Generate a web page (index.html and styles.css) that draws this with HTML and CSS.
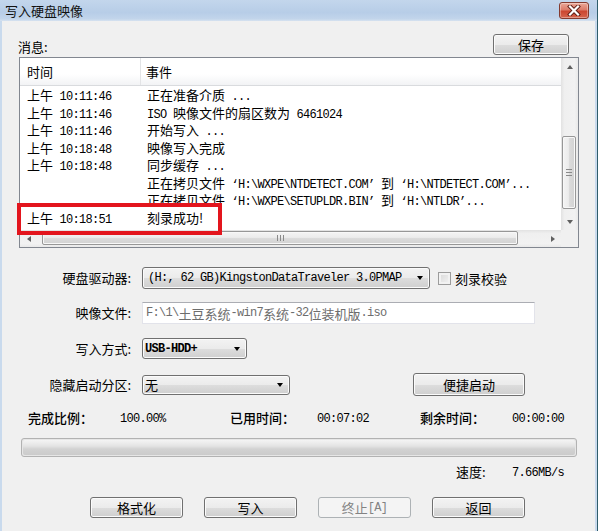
FILE: index.html
```html
<!DOCTYPE html>
<html lang="zh-CN">
<head>
<meta charset="utf-8">
<title>写入硬盘映像</title>
<link rel="stylesheet" href="styles.css">
</head>
<body>
<div class="window">
  <div class="titlebar">
    <span class="title">写入硬盘映像</span>
    <div class="close">
      <svg width="14" height="11" viewBox="0 0 14 11">
        <path d="M3 1.5 L11 9.5 M11 1.5 L3 9.5" stroke="#5a1a12" stroke-width="4" stroke-linecap="square" fill="none"/>
        <path d="M3 1.5 L11 9.5 M11 1.5 L3 9.5" stroke="#ffffff" stroke-width="2.2" stroke-linecap="square" fill="none"/>
      </svg>
    </div>
  </div>
  <div class="client">
    <div class="msg-head">
      <span class="msg-label">消息:</span>
      <div class="btn btn-save">保存</div>
    </div>

    <div class="listview">
      <div class="lv-body">
        <div class="lv-content">
          <div class="lv-header">
            <div class="h1">时间</div>
            <div class="h2">事件</div>
          </div>
          <div class="lv-row"><div class="c1">上午<span class="m"> 10:11:46</span></div><div class="c2">正在准备介质<span class="m"> ...</span></div></div>
          <div class="lv-row"><div class="c1">上午<span class="m"> 10:11:46</span></div><div class="c2"><span class="m">ISO </span>映像文件的扇区数为<span class="m"> 6461024</span></div></div>
          <div class="lv-row"><div class="c1">上午<span class="m"> 10:11:46</span></div><div class="c2">开始写入<span class="m"> ...</span></div></div>
          <div class="lv-row"><div class="c1">上午<span class="m"> 10:18:48</span></div><div class="c2">映像写入完成</div></div>
          <div class="lv-row"><div class="c1">上午<span class="m"> 10:18:48</span></div><div class="c2">同步缓存<span class="m"> ...</span></div></div>
          <div class="lv-row"><div class="c1"></div><div class="c2">正在拷贝文件<span class="m"> ‘H:\WXPE\NTDETECT.COM’ </span>到<span class="m"> ‘H:\NTDETECT.COM’...</span></div></div>
          <div class="lv-row"><div class="c1"></div><div class="c2">正在拷贝文件<span class="m"> ‘H:\WXPE\SETUPLDR.BIN’ </span>到<span class="m"> ‘H:\NTLDR’...</span></div></div>
          <div class="lv-row"><div class="c1">上午<span class="m"> 10:18:51</span></div><div class="c2">刻录成功!</div></div>
        </div>
        <div class="vscroll">
          <div class="sarrow"><span class="tri-up"></span></div>
          <div class="vtrack">
            <div class="vthumb"><span class="vgrip"></span></div>
          </div>
          <div class="sarrow"><span class="tri-down"></span></div>
        </div>
      </div>
      <div class="lv-foot">
        <div class="hscroll">
          <div class="sarrow-h"><span class="tri-left"></span></div>
          <div class="htrack">
            <div class="hthumb"><span class="hgrip"></span></div>
          </div>
          <div class="sarrow-h"><span class="tri-right"></span></div>
        </div>
        <div class="corner"></div>
      </div>
      <div class="mark"></div>
    </div>

    <div class="frow row-drive">
      <div class="flabel">硬盘驱动器:</div>
      <div class="select sel-drive"><span class="m">(H:, 62 GB)KingstonDataTraveler 3.0PMAP</span><span class="caret"></span></div>
      <div class="check"></div>
      <span class="check-label">刻录校验</span>
    </div>

    <div class="frow row-image">
      <div class="flabel">映像文件:</div>
      <div class="input"><span class="m">F:\1\</span>土豆系统<span class="m">-win7</span>系统<span class="m">-32</span>位装机版<span class="m">.iso</span></div>
    </div>

    <div class="frow row-mode">
      <div class="flabel">写入方式:</div>
      <div class="select sel-mode"><span class="m b">USB-HDD+</span><span class="caret"></span></div>
    </div>

    <div class="frow row-hide">
      <div class="flabel">隐藏启动分区:</div>
      <div class="select sel-hide"><span>无</span><span class="caret"></span></div>
      <div class="btn btn-quick">便捷启动</div>
    </div>

    <div class="stats">
      <div class="st st-l1">完成比例：</div>
      <div class="st st-v1"><span class="m">100.00%</span></div>
      <div class="st st-l2">已用时间：</div>
      <div class="st st-v2"><span class="m">00:07:02</span></div>
      <div class="st st-l3">剩余时间：</div>
      <div class="st"><span class="m">00:00:00</span></div>
    </div>

    <div class="progress"><div class="fill" style="width:100%"></div></div>

    <div class="speed">
      <div class="sp-label">速度:</div>
      <div><span class="m">7.66MB/s</span></div>
    </div>

    <div class="actions">
      <div class="btn">格式化</div>
      <div class="btn">写入</div>
      <div class="btn disabled">终止<span class="m">[A]</span></div>
      <div class="btn">返回</div>
    </div>
  </div>
</div>
</body>
</html>
```

FILE: styles.css
```css
* { box-sizing: border-box; margin: 0; padding: 0; }
html, body { width: 598px; height: 531px; overflow: hidden; }
body {
  background: #f0f0f0;
  font-family: "Noto Sans CJK SC", "Noto Sans", sans-serif;
  font-size: 13px;
  color: #000;
}
.m {
  font-family: "Liberation Mono", "Noto Sans CJK SC", monospace;
  font-size: 12px;
  letter-spacing: -0.7px;
}
.b { font-weight: bold; }

.window {
  width: 598px;
  height: 531px;
  display: flex;
  flex-direction: column;
  border-right: 1px solid #2f5d6b;
}

/* title bar */
.titlebar {
  height: 21px;
  flex: none;
  display: flex;
  align-items: flex-start;
  padding-left: 5px;
  background: linear-gradient(#c3d6ec, #b7cde7 60%, #c2d5eb 90%, #d6e2ef);
}
.title {
  font-size: 13px;
  line-height: 21px;
  color: #111;
}
.close {
  margin-left: auto;
  margin-right: 8px;
  margin-top: 2px;
  width: 30px;
  height: 17px;
  border: 1px solid #843a2e;
  border-radius: 3px;
  background: linear-gradient(#eaa898 0%, #dc7b69 45%, #cb4630 55%, #d6644d 100%);
  display: flex;
  align-items: center;
  justify-content: center;
  box-shadow: inset 0 0 0 1px rgba(255,255,255,0.35);
}

/* client area */
.client {
  flex: 1;
  position: relative;
  border-left: 2px solid #c9daed;
  border-right: 2px solid #c9daed;
  background: #f0f0f0;
}

.msg-head {
  margin-top: 13px;
  height: 21px;
  display: flex;
  align-items: flex-start;
  padding-left: 16px;
  padding-right: 26px;
}
.msg-label {
  margin-top: 5px;
  line-height: 16px;
}

/* buttons */
.btn {
  height: 21px;
  border: 1px solid #707070;
  border-radius: 3px;
  background: linear-gradient(#f3f3f3 0%, #ebebeb 50%, #dddddd 51%, #cfcfcf 100%);
  box-shadow: inset 0 0 0 1px #fbfbfb;
  display: flex;
  align-items: center;
  justify-content: center;
  line-height: 16px;
  color: #000;
}
.btn.disabled {
  border-color: #adb2b5;
  background: #f4f4f4;
  box-shadow: none;
  color: #838383;
}
.btn-save { margin-left: auto; width: 76px; }

/* list view */
.listview {
  position: relative;
  margin-top: 2px;
  margin-left: 17px;
  width: 560px;
  height: 191px;
  border: 1px solid #828790;
  background: #fff;
  display: flex;
  flex-direction: column;
}
.lv-body { height: 172px; display: flex; }
.lv-content { flex: 1; overflow: hidden; }
.lv-header {
  height: 28px;
  display: flex;
  border-bottom: 1px solid #d9dbde;
  background: linear-gradient(#ffffff 0%, #ffffff 60%, #f2f3f5 100%);
}
.h1 {
  width: 121px;
  padding-left: 7px;
  border-right: 1px solid #e3e4e6;
  display: flex;
  align-items: center;
}
.h2 {
  padding-left: 5px;
  display: flex;
  align-items: center;
}
.lv-row {
  height: 17.5px;
  line-height: 17.5px;
  display: flex;
  white-space: nowrap;
}
.c1 { width: 127px; padding-left: 7px; flex: none; }
.c2 { flex: none; }

/* scrollbars */
.vscroll {
  width: 17px;
  flex: none;
  display: flex;
  flex-direction: column;
  background: linear-gradient(90deg, #e2e2e2 0%, #efefef 20%, #f2f2f2 80%, #e9e9e9 100%);
}
.sarrow {
  height: 17px;
  flex: none;
  display: flex;
  align-items: center;
  justify-content: center;
}
.vtrack { flex: 1; padding-top: 61px; padding-left: 1px; padding-right: 2px; }
.vthumb {
  height: 73px;
  border: 1px solid #979797;
  border-radius: 2px;
  background: linear-gradient(90deg, #f4f4f4 0%, #ececec 45%, #dadada 55%, #d2d2d2 100%);
  box-shadow: inset 0 0 0 1px #f8f8f8;
  display: flex;
  align-items: center;
  justify-content: center;
}
.vgrip {
  width: 6px;
  height: 7px;
  background: repeating-linear-gradient(#8a8a8a 0 1px, transparent 1px 3px);
}
.lv-foot { height: 17px; display: flex; }
.hscroll {
  flex: 1;
  display: flex;
  background: linear-gradient(#e2e2e2 0%, #efefef 20%, #f2f2f2 80%, #e9e9e9 100%);
}
.sarrow-h {
  width: 17px;
  flex: none;
  display: flex;
  align-items: center;
  justify-content: center;
}
.htrack { flex: 1; padding-left: 5px; padding-top: 1px; padding-bottom: 2px; }
.hthumb {
  width: 476px;
  height: 100%;
  border: 1px solid #979797;
  border-radius: 2px;
  background: linear-gradient(#f4f4f4 0%, #ececec 45%, #dadada 55%, #d2d2d2 100%);
  box-shadow: inset 0 0 0 1px #f8f8f8;
  display: flex;
  align-items: center;
  justify-content: center;
}
.hgrip {
  width: 7px;
  height: 6px;
  background: repeating-linear-gradient(90deg, #8a8a8a 0 1px, transparent 1px 3px);
}
.corner { width: 17px; flex: none; background: #f0f0f0; }
.tri-up, .tri-down, .tri-left, .tri-right { width: 0; height: 0; display: block; }
.tri-up { border-left: 3.5px solid transparent; border-right: 3.5px solid transparent; border-bottom: 4px solid #606060; }
.tri-down { border-left: 3.5px solid transparent; border-right: 3.5px solid transparent; border-top: 4px solid #606060; }
.tri-left { border-top: 3.5px solid transparent; border-bottom: 3.5px solid transparent; border-right: 4px solid #606060; }
.tri-right { border-top: 3.5px solid transparent; border-bottom: 3.5px solid transparent; border-left: 4px solid #606060; }

.mark {
  position: absolute;
  left: -3px;
  top: 145px;
  width: 205px;
  height: 32px;
  border: 4px solid #e3151d;
}

/* form */
.frow { display: flex; align-items: center; }
.flabel { width: 129px; flex: none; text-align: right; line-height: 16px; }
.row-drive { margin-top: 19px; height: 22px; }
.row-image { margin-top: 13px; height: 22px; }
.row-mode { margin-top: 14px; height: 21px; }
.row-hide { margin-top: 14px; height: 23px; }

.select {
  margin-left: 11px;
  height: 22px;
  border: 1px solid #707070;
  border-radius: 3px;
  background: linear-gradient(#f3f3f3 0%, #ebebeb 50%, #dddddd 51%, #cfcfcf 100%);
  box-shadow: inset 0 0 0 1px #fbfbfb;
  display: flex;
  align-items: center;
  padding-left: 5px;
  white-space: nowrap;
}
.caret {
  margin-left: auto;
  margin-right: 6px;
  width: 0;
  height: 0;
  border-left: 3.5px solid transparent;
  border-right: 3.5px solid transparent;
  border-top: 4px solid #000;
}
.sel-drive { width: 288px; }
.sel-mode { width: 105px; height: 21px; padding-left: 2px; }
.sel-hide { width: 148px; height: 20px; padding-left: 2px; }
.check {
  margin-left: 8px;
  width: 13px;
  height: 13px;
  border: 1px solid #9c9c9c;
  background: linear-gradient(135deg, #d8d8d8, #f4f4f4);
  box-shadow: inset 0 0 0 2px #f2f2f2;
}
.check-label { margin-left: 4px; }

.input {
  margin-left: 11px;
  width: 393px;
  height: 22px;
  border: 1px solid #e2e3ea;
  border-top-color: #abadb3;
  background: #fff;
  color: #6d6d6d;
  padding-left: 3px;
  display: flex;
  align-items: center;
  white-space: nowrap;
}

.btn-quick { margin-left: 123px; width: 112px; height: 23px; }

/* stats */
.stats {
  margin-top: 14px;
  height: 16px;
  display: flex;
  align-items: center;
  padding-left: 26px;
  line-height: 16px;
  white-space: nowrap;
}
.st { flex: none; }
.st-l1 { width: 92px; font-weight: 500; }
.st-v1 { width: 110px; }
.st-l2 { width: 87px; font-weight: 500; }
.st-v2 { width: 103px; }
.st-l3 { width: 92px; font-weight: 500; }

.progress {
  margin-top: 12px;
  margin-left: 19px;
  width: 556px;
  height: 19px;
  border: 1px solid #b2b2b2;
  border-radius: 3px;
  background: #e6e6e6;
  padding: 1px;
}
.fill {
  height: 100%;
  border-radius: 2px;
  background: linear-gradient(#f4f4f4 0%, #e4e4e4 40%, #d2d2d2 60%, #cbcbcb 100%);
}

.speed {
  margin-top: 7px;
  height: 16px;
  display: flex;
  align-items: center;
  padding-left: 454px;
  line-height: 16px;
}
.sp-label { width: 56px; }

.actions {
  margin-top: 17px;
  display: flex;
  gap: 21px;
  padding-left: 88px;
}
.actions .btn { width: 93px; }
```
